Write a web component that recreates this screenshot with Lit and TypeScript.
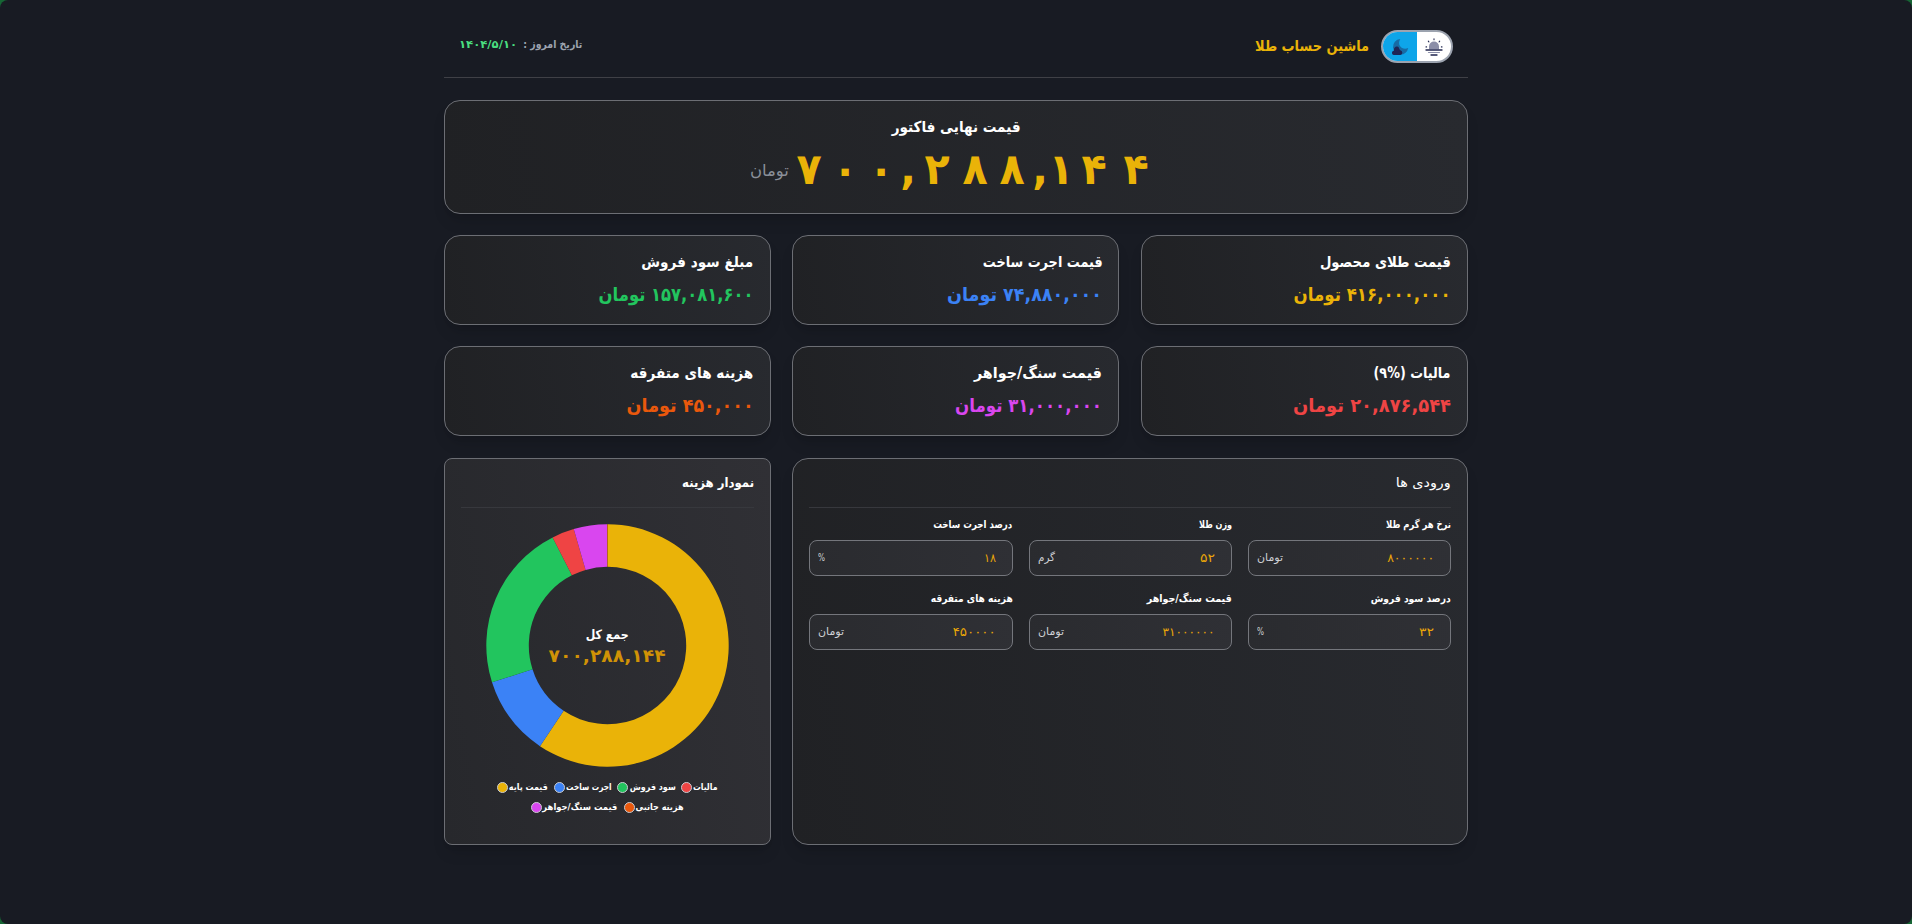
import { LitElement, html, css, svg } from "lit";
import { customElement, property, state } from "lit/decorators.js";
import { styleMap } from "lit/directives/style-map.js";

/** A single line of text, condensed or widened to an exact width. */
@customElement("fit-text")
class FitText extends LitElement {
  @property({ type: Number }) w = 0;
  @property() text = "";
  @property() anchor = "right";
  @state() private scale = 1;

  static styles = css`
    :host { display: block; flex: none; white-space: nowrap; }
    .box { display: flex; direction: rtl; }
    .box.left { direction: ltr; }
    .line { display: block; flex: none; unicode-bidi: isolate; direction: rtl; transform-origin: right center; }
    .left .line { transform-origin: left center; }
  `;

  firstUpdated() {
    const line = this.renderRoot.querySelector(".line") as HTMLElement;
    const natural = line.getBoundingClientRect().width;
    if (natural > 0) this.scale = this.w / natural;
  }

  render() {
    return html`<div class="box ${this.anchor}" style=${styleMap({ width: `${this.w}px` })}>
      <span class="line" style=${styleMap({ transform: `scaleX(${this.scale})` })}>${this.text}</span>
    </div>`;
  }
}

const CARDS = [
  { title: "قیمت طلای محصول", tw: 131, value: "۴۱۶,۰۰۰,۰۰۰ تومان", vw: 157, tone: "gold" },
  { title: "قیمت اجرت ساخت", tw: 120, value: "۷۴,۸۸۰,۰۰۰ تومان", vw: 155, tone: "blue" },
  { title: "مبلغ سود فروش", tw: 112, value: "۱۵۷,۰۸۱,۶۰۰ تومان", vw: 155, tone: "green" },
  { title: "مالیات (%۹)", tw: 77, value: "۲۰,۸۷۶,۵۴۴ تومان", vw: 158, tone: "red" },
  { title: "قیمت سنگ/جواهر", tw: 128, value: "۳۱,۰۰۰,۰۰۰ تومان", vw: 147, tone: "pink" },
  { title: "هزینه های متفرقه", tw: 123, value: "۴۵۰,۰۰۰ تومان", vw: 127, tone: "orange" },
];

const FIELDS = [
  { label: "نرخ هر گرم طلا", lw: 65, value: "۸۰۰۰۰۰۰", vw: 47, unit: "تومان", uw: 26 },
  { label: "وزن طلا", lw: 33, value: "۵۲", vw: 15, unit: "گرم", uw: 17 },
  { label: "درصد اجرت ساخت", lw: 79, value: "۱۸", vw: 12, unit: "%", uw: 7 },
  { label: "درصد سود فروش", lw: 80, value: "۳۲", vw: 15, unit: "%", uw: 7 },
  { label: "قیمت سنگ/جواهر", lw: 85, value: "۳۱۰۰۰۰۰۰", vw: 52, unit: "تومان", uw: 26 },
  { label: "هزینه های متفرقه", lw: 82, value: "۴۵۰۰۰۰", vw: 43, unit: "تومان", uw: 26 },
];

const SLICES = [
  { amount: 416000000, color: "#eab308" },
  { amount: 74880000, color: "#3b82f6" },
  { amount: 157081600, color: "#22c55e" },
  { amount: 20876544, color: "#ef4444" },
  { amount: 31000000, color: "#d946ef" },
  { amount: 450000, color: "#ea580c" },
];

const LEGEND = [
  [
    { text: "قیمت پایه", w: 39, color: "#eab308" },
    { text: "اجرت ساخت", w: 45.5, color: "#3b82f6" },
    { text: "سود فروش", w: 46, color: "#22c55e" },
    { text: "مالیات", w: 24.5, color: "#ef4444" },
  ],
  [
    { text: "قیمت سنگ/جواهر", w: 75, color: "#d946ef" },
    { text: "هزینه جانبی", w: 48, color: "#ea580c" },
  ],
];

/* Cell width of each glyph in the spaced-out headline total. */
const GLYPH_WIDTH: Record<string, number> = { "۷": 27, "۰": 27, ",": 10, "۲": 29, "۸": 28.5, "۱": 14, "۴": 33 };

const OUTER = 121.2;
const INNER = 78.7;

function ring() {
  const total = SLICES.reduce((sum, s) => sum + s.amount, 0);
  const at = (r: number, a: number) => `${(r * Math.sin(a)).toFixed(3)} ${(-r * Math.cos(a)).toFixed(3)}`;
  let from = 0;
  return SLICES.map((s) => {
    const to = from + (s.amount / total) * Math.PI * 2;
    const large = to - from > Math.PI ? 1 : 0;
    const d = `M${at(OUTER, from)}A${OUTER} ${OUTER} 0 ${large} 1 ${at(OUTER, to)}L${at(INNER, to)}A${INNER} ${INNER} 0 ${large} 0 ${at(INNER, from)}Z`;
    from = to;
    return svg`<path d=${d} fill=${s.color}></path>`;
  });
}

@customElement("app-root")
class AppRoot extends LitElement {
  static styles = css`
    :host {
      display: block;
      height: 924px;
      background: #166534;
      font-family: "DejaVu Sans", "Noto Sans", sans-serif;
      color: #fff;
      overflow: hidden;
    }
    * { box-sizing: border-box; }
    .page { height: 924px; border-radius: 8px; background: #181b23; direction: rtl; }
    .wrap { width: 1024px; margin: 0 auto; }
    header {
      height: 78px; border-bottom: 1px solid #3f4046; padding: 16px 15px 0;
      display: flex; justify-content: space-between; align-items: center;
    }
    .brand { display: flex; align-items: center; gap: 12px; }
    .toggle {
      width: 72px; height: 33px; border: 2px solid #9ca3af; border-radius: 17px;
      display: flex; overflow: hidden; background: #fff;
    }
    .half { flex: 1; display: flex; align-items: center; justify-content: center; }
    .half.night { background: #0ea5e9; }
    .brand-name { color: #eab308; font-size: 15px; font-weight: 700; line-height: 20px; margin-top: -2px; }
    .date { display: flex; gap: 6px; font-size: 11px; font-weight: 700; line-height: 16px; color: #9ca3af; margin-top: -4px; }
    .date .today { color: #4ade80; }

    .surface {
      background: linear-gradient(80deg, #202124, #282a2f);
      border: 1px solid #6c6e74; border-radius: 16px;
      box-shadow: 0 10px 15px -3px rgba(0, 0, 0, 0.12), 0 4px 6px -4px rgba(0, 0, 0, 0.12);
    }
    .hero { margin-top: 22px; height: 114px; display: flex; flex-direction: column; align-items: center; padding-top: 15.5px; }
    .hero-title { font-size: 15px; font-weight: 700; line-height: 20px; }
    .hero-line { display: flex; align-items: center; gap: 7px; margin-top: 6px; }
    .hero-value {
      display: flex; direction: ltr; gap: 9px; padding-right: 10px;
      color: #eab308; font-size: 43px; font-weight: 700; line-height: 52px;
    }
    .glyph { display: flex; justify-content: center; flex: none; }
    .glyph span { flex: none; transform: scaleX(0.96); }
    .hero-unit { color: #8b9099; font-size: 16px; line-height: 24px; margin-top: 5px; }

    .grid { display: grid; grid-template-columns: 327px 327px 1fr; column-gap: 21.7px; row-gap: 21px; margin-top: 21px; }
    .card { height: 90px; padding: 14.5px 16px 0; }
    .card-title { font-size: 15px; font-weight: 700; line-height: 22px; }
    .card-value { font-size: 19px; font-weight: 700; line-height: 28px; margin-top: 7px; }
    .gold { color: #eab308; } .blue { color: #3b82f6; } .green { color: #22c55e; }
    .red { color: #ef4444; } .pink { color: #d946ef; } .orange { color: #ea580c; }

    .panel { margin-top: 1px; height: 387px; padding: 14px 16px 0; }
    .inputs { grid-column: span 2; }
    .head { height: 35px; border-bottom: 1px solid #37383d; line-height: 20px; }
    .head-title { font-size: 13px; }
    .head-title.strong { font-weight: 700; }
    .fields { display: grid; grid-template-columns: repeat(3, 1fr); column-gap: 16px; row-gap: 14px; padding-top: 8px; }
    .label { font-size: 10.5px; font-weight: 700; line-height: 17px; height: 24px; }
    .input {
      height: 36px; border: 1px solid #74767c; border-radius: 8px;
      background: linear-gradient(80deg, #2a2b2f, #2f3035);
      display: flex; align-items: center; justify-content: space-between; padding: 0 16px 1px 8px;
    }
    .input-value { color: #eaa608; font-size: 12px; line-height: 16px; }
    .input-unit { color: #cfd1d6; font-size: 11px; line-height: 16px; }
    .chart { border-radius: 8px; background: linear-gradient(80deg, #27282c, #303035); display: flex; flex-direction: column; }
    .donut { display: grid; place-items: center; margin-top: 15.5px; height: 243px; }
    .donut > * { grid-area: 1 / 1; }
    .ring { display: block; width: 243px; height: 243px; }
    .sum { display: flex; flex-direction: column; align-items: center; padding-top: 2px; }
    .sum-title { font-size: 13px; font-weight: 700; line-height: 18px; }
    .sum-value { font-size: 18px; font-weight: 700; line-height: 23px; color: #d09206; }
    .legend { display: flex; flex-direction: column; margin-top: 11px; align-items: center; }
    .legend-row { display: flex; direction: ltr; gap: 6px; height: 19.5px; align-items: center; }
    .item { display: flex; align-items: center; gap: 1px; font-size: 9px; font-weight: 700; line-height: 16px; }
    .dot { width: 11px; height: 11px; border-radius: 50%; border: 1px solid #c9cbd0; margin-top: 1px; }
  `;

  private sun() {
    return html`<svg width="18" height="18" viewBox="0 0 18 18">
      <path d="M4 11.2V8.6a5 5 0 0 1 10 0v2.6z" fill="#8b8ea8"></path>
      <g stroke="#20264f" stroke-width="1.1" stroke-linecap="round" fill="none">
        <path d="M9 .8v1M3.3 3.2l.6.6M14.7 3.2l-.6.6M1 8.9h.6M17 8.9h-.6"></path>
        <path d="M1 12h16" stroke-width="1.3"></path>
        <path d="M6 17h6" stroke-width="1.3"></path>
      </g>
      <path d="M3.5 14.5h11" stroke="#8b8ea8" stroke-width="1.2" stroke-linecap="round"></path>
    </svg>`;
  }

  private moon() {
    return html`<svg width="18" height="18" viewBox="0 0 18 18">
      <path d="M9.2 1A8 8 0 0 0 2 9.6L3.1 12.8L9.6 16.6A8 8 0 0 0 17.2 10C11.5 12.5 5.5 7.5 9.2 1z" fill="#176ba5"></path>
      <path d="M3.2 16.9a2.1 2.1 0 0 1-.4-4.2c.2-1.2 0-2.2 1-3.3a2.6 2.6 0 0 1 4.4 1c.5 1 .6 1.5 1.4 2a2.3 2.3 0 0 1-.2 4.5z" fill="#1e2556"></path>
    </svg>`;
  }

  render() {
    return html`<div class="page"><div class="wrap">
      <header>
        <div class="brand">
          <div class="toggle">
            <div class="half">${this.sun()}</div>
            <div class="half night">${this.moon()}</div>
          </div>
          <fit-text class="brand-name" .w=${114} text="ماشین حساب طلا"></fit-text>
        </div>
        <div class="date">
          <fit-text .w=${59} text="تاریخ امروز :"></fit-text>
          <fit-text class="today" .w=${58} text="۱۴۰۴/۵/۱۰"></fit-text>
        </div>
      </header>

      <section class="surface hero">
        <fit-text class="hero-title" .w=${129} text="قیمت نهایی فاکتور"></fit-text>
        <div class="hero-line">
          <div class="hero-value">${[..."۷۰۰,۲۸۸,۱۴۴"].map(
            (ch) => html`<div class="glyph" style=${styleMap({ width: `${GLYPH_WIDTH[ch]}px` })}><span>${ch}</span></div>`
          )}</div>
          <fit-text class="hero-unit" .w=${39} text="تومان"></fit-text>
        </div>
      </section>

      <section class="grid">
        ${CARDS.map((c) => html`<div class="surface card">
          <fit-text class="card-title" .w=${c.tw} .text=${c.title}></fit-text>
          <fit-text class="card-value ${c.tone}" .w=${c.vw} .text=${c.value}></fit-text>
        </div>`)}
        <div class="surface panel inputs">
          <div class="head"><fit-text class="head-title" .w=${55} text="ورودی ها"></fit-text></div>
          <div class="fields">
            ${FIELDS.map((f) => html`<div>
              <div class="label"><fit-text .w=${f.lw} .text=${f.label}></fit-text></div>
              <div class="input">
                <fit-text class="input-value" .w=${f.vw} .text=${f.value}></fit-text>
                <fit-text class="input-unit" anchor="left" .w=${f.uw} .text=${f.unit}></fit-text>
              </div>
            </div>`)}
          </div>
        </div>
        <div class="surface panel chart">
          <div class="head"><fit-text class="head-title strong" .w=${72} text="نمودار هزینه"></fit-text></div>
          <div class="donut">
            <svg class="ring" viewBox="-121.5 -121.5 243 243">${ring()}</svg>
            <div class="sum">
              <fit-text class="sum-title" .w=${43} text="جمع کل"></fit-text>
              <fit-text class="sum-value" .w=${117} text="۷۰۰,۲۸۸,۱۴۴"></fit-text>
            </div>
          </div>
          <div class="legend">
            ${LEGEND.map((row) => html`<div class="legend-row">
              ${row.map((i) => html`<div class="item">
                <span class="dot" style=${styleMap({ background: i.color })}></span>
                <fit-text .w=${i.w} .text=${i.text}></fit-text>
              </div>`)}
            </div>`)}
          </div>
        </div>
      </section>
    </div></div>`;
  }
}
